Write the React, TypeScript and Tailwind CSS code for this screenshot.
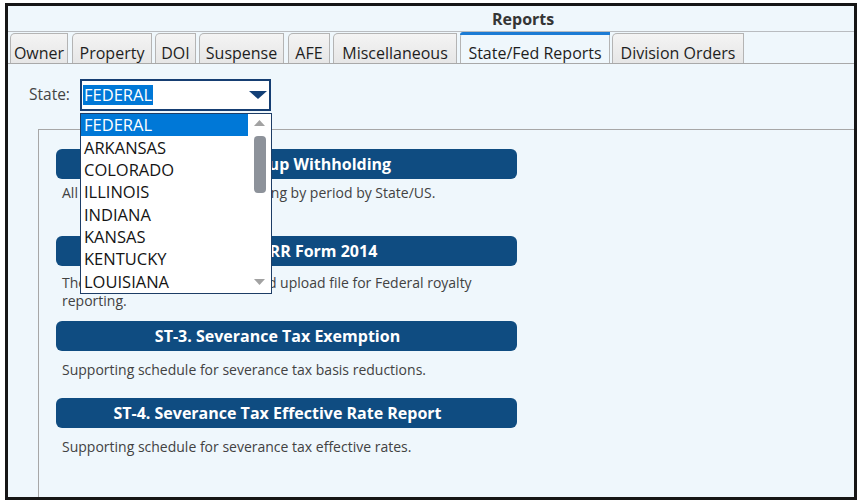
const tabs = [
  { label: "Owner", ml: "ml-[2px]", w: "w-[58px]" },
  { label: "Property", ml: "ml-[4px]", w: "w-[80px]" },
  { label: "DOI", ml: "ml-[3px]", w: "w-[41px]" },
  { label: "Suspense", ml: "ml-[3px]", w: "w-[85px]" },
  { label: "AFE", ml: "ml-[4px]", w: "w-[42px]" },
  { label: "Miscellaneous", ml: "ml-[3px]", w: "w-[124px]" },
  { label: "State/Fed Reports", ml: "ml-[3px]", w: "w-[150px]", active: true },
  { label: "Division Orders", ml: "ml-[2px]", w: "w-[132px]" },
];

const states = ["FEDERAL", "ARKANSAS", "COLORADO", "ILLINOIS", "INDIANA", "KANSAS", "KENTUCKY", "LOUISIANA"];

const reports = [
  {
    title: "ST-1. US Backup Withholding",
    desc: ["All unit royalty backup withholding by period by State/US."],
    mt: "mt-[19px]",
    dmt: "mt-[5px]",
  },
  {
    title: "ST-2. US ONRR Form 2014",
    desc: ["The Form ONRR-2014 report and upload file for Federal royalty", "reporting."],
    mt: "mt-[34px]",
    dmt: "mt-[8px]",
  },
  {
    title: "ST-3. Severance Tax Exemption",
    desc: ["Supporting schedule for severance tax basis reductions."],
    mt: "mt-[11px]",
    dmt: "mt-[10px]",
  },
  {
    title: "ST-4. Severance Tax Effective Rate Report",
    desc: ["Supporting schedule for severance tax effective rates."],
    mt: "mt-[19px]",
    dmt: "mt-[10px]",
  },
];

function Tab({ label, ml, w, active }: { label: string; ml: string; w: string; active?: boolean }) {
  if (active) {
    return (
      <div
        className={`${ml} ${w} relative z-10 h-[31px] border-x border-[#b4b4b4] bg-[#eff7fc] rounded-tl-[5px] flex justify-center pt-[11px] leading-[20px] text-[#1e1e1e]`}
      >
        <div className="absolute left-[-1px] right-[-1px] top-0 h-[3px] bg-[#1c7bd4] rounded-tl-[5px]" />
        {label}
      </div>
    );
  }
  return (
    <div
      className={`${ml} ${w} h-[30px] border-x border-t border-[#b4b4b4] bg-gradient-to-b from-[#f4f4f4] to-[#e6e6e6] rounded-tl-[5px] flex justify-center pt-[9px] leading-[20px] text-[#1e1e1e]`}
    >
      {label}
    </div>
  );
}

function StateSelect() {
  return (
    <div className="relative w-[191px] h-[32px]">
      <div className="w-full h-full border-2 border-[#163e72] bg-white flex items-center pl-[1px]">
        <span className="bg-[#0078d7] text-white leading-[20px] px-[1px] text-[16.5px]">FEDERAL</span>
        <svg className="ml-auto mr-[2px]" width="18" height="8" viewBox="0 0 18 8">
          <path d="M0 0 H18 L9 8 Z" fill="#123f76" />
        </svg>
      </div>
      <div className="absolute left-0 top-[34px] w-[192px] h-[181px] border border-[#1d3d66] bg-white flex z-20 text-[16.5px]">
        <div className="flex-1 flex flex-col">
          {states.map((s, i) => (
            <div
              key={s}
              className={`h-[22.5px] pl-[3px] flex items-center leading-[20px] ${
                i === 0 ? "bg-[#0078d7] text-white" : "text-[#141414]"
              }`}
            >
              {s}
            </div>
          ))}
        </div>
        <div className="w-[23px] flex flex-col items-center">
          <svg className="mt-[6px]" width="11" height="6" viewBox="0 0 11 6">
            <path d="M0 6 L5.5 0 L11 6 Z" fill="#a2a2a2" />
          </svg>
          <div className="mt-[10px] w-[12px] h-[57px] rounded-[4px] bg-[#8d929a]" />
          <svg className="mt-auto mb-[8px]" width="11" height="6" viewBox="0 0 11 6">
            <path d="M0 0 L11 0 L5.5 6 Z" fill="#a2a2a2" />
          </svg>
        </div>
      </div>
    </div>
  );
}

export default function App() {
  return (
    <div className="w-[861px] h-[503px] bg-white pt-[3px] pl-[5px] font-['Open_Sans',sans-serif] text-[16px]">
      <div className="w-[852px] h-[497px] border-[3px] border-[#161616] bg-[#eff7fc] flex flex-col overflow-hidden">
        <div className="h-[26px] border-b border-[#b9bcc0] pl-[484px] flex items-center font-bold text-[16px] text-[#353535]">
          Reports
        </div>
        <div className="h-[32px] flex items-end border-b border-[#a9a9a9] text-[16px]">
          {tabs.map((t) => (
            <Tab key={t.label} {...t} />
          ))}
        </div>
        <div className="flex-1 flex flex-col">
          <div className="mt-[15px] flex items-center">
            <span className="ml-[21px] w-[51px] text-[#444] text-[15.5px]">State:</span>
            <StateSelect />
          </div>
          <div className="mt-[18px] ml-[30px] flex-1 border-l border-t border-[#a7a7a7] flex flex-col">
            {reports.map((r) => (
              <div key={r.title} className={`${r.mt} ml-[17px] w-[461px]`}>
                <div className="h-[30px] rounded-[6px] bg-[#0f4c81] flex items-center justify-center pr-[18px] text-white font-bold text-[16px]">
                  {r.title}
                </div>
                <div className={`${r.dmt} ml-[6px] text-[14px] leading-[18px] text-[#424242]`}>
                  {r.desc.map((d) => (
                    <div key={d}>{d}</div>
                  ))}
                </div>
              </div>
            ))}
          </div>
        </div>
      </div>
    </div>
  );
}
